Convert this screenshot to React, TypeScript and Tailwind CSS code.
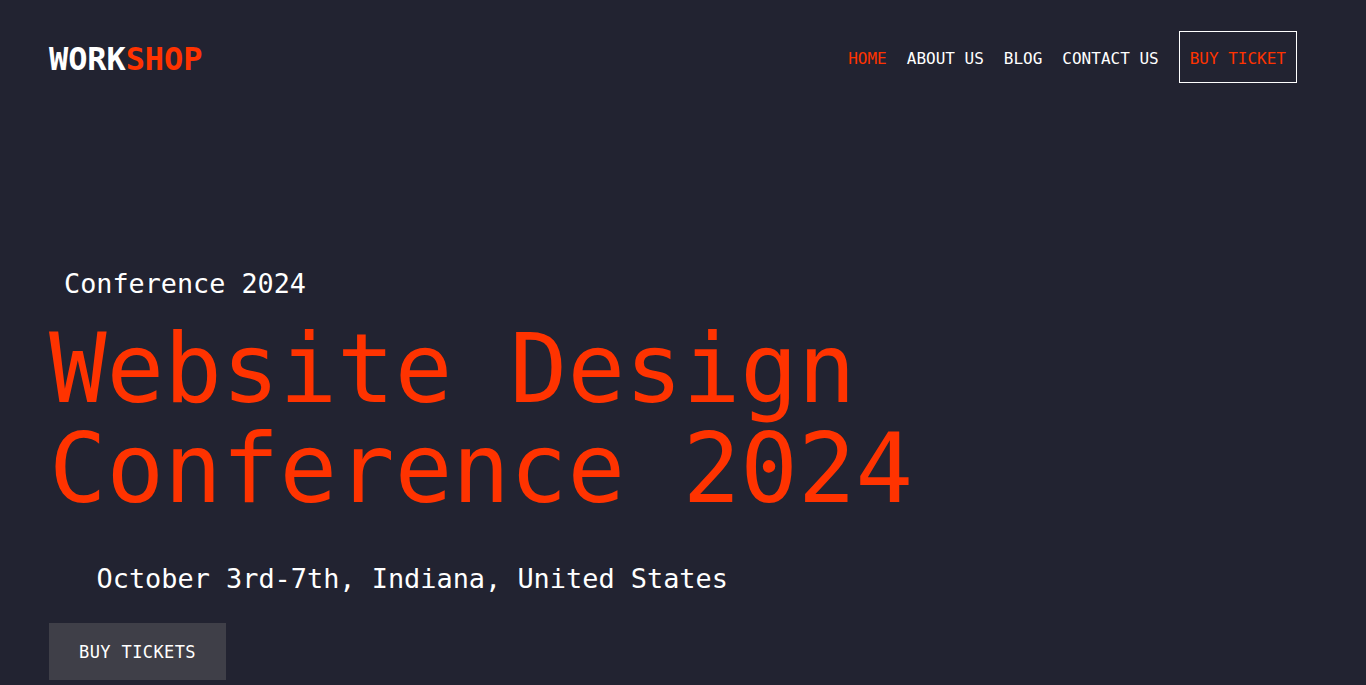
import React from "react";

const mono = { fontFamily: '"DejaVu Sans Mono", "Liberation Mono", monospace' };

export default function App() {
  return (
    <div className="min-h-[685px] w-full bg-[#222331] text-white" style={mono}>
      <header className="flex items-center justify-between pl-[49px] pr-[69px] pt-[31px]">
        <div className="pt-[3px] text-[32px] font-bold leading-none tracking-[-0.1px]">
          <span className="text-white">WORK</span>
          <span className="text-[#ff3300]">SHOP</span>
        </div>
        <nav className="flex items-center gap-[20px] text-[16px] leading-[24px]">
          <a className="pt-[3px] text-[#ff3300]">HOME</a>
          <a className="pt-[3px] text-white">ABOUT US</a>
          <a className="pt-[3px] text-white">BLOG</a>
          <a className="pt-[3px] text-white">CONTACT US</a>
          <a className="flex h-[52px] items-center border border-white px-[10px] pt-[3px] text-[#ff3300]">BUY TICKET</a>
        </nav>
      </header>
      <section className="pl-[49px] pt-[183px]">
        <p className="pl-[15px] text-[26.8px] leading-[36px] text-white">Conference 2024</p>
        <h1 className="mt-[17px] text-[95.7px] font-normal leading-[100px] text-[#ff3300]">
          <span className="block">Website Design</span>
          <span className="block">Conference 2024</span>
        </h1>
        <p className="mt-[42px] pl-[47.5px] text-[26.9px] leading-[36px] text-white">
          October 3rd-7th, Indiana, United States
        </p>
        <div className="mt-[25.5px] flex">
          <a className="flex h-[57px] items-center bg-[#3f3f48] px-[30px] pt-[3px] text-[17px] tracking-[0.4px] text-white">
            BUY TICKETS
          </a>
        </div>
      </section>
    </div>
  );
}
